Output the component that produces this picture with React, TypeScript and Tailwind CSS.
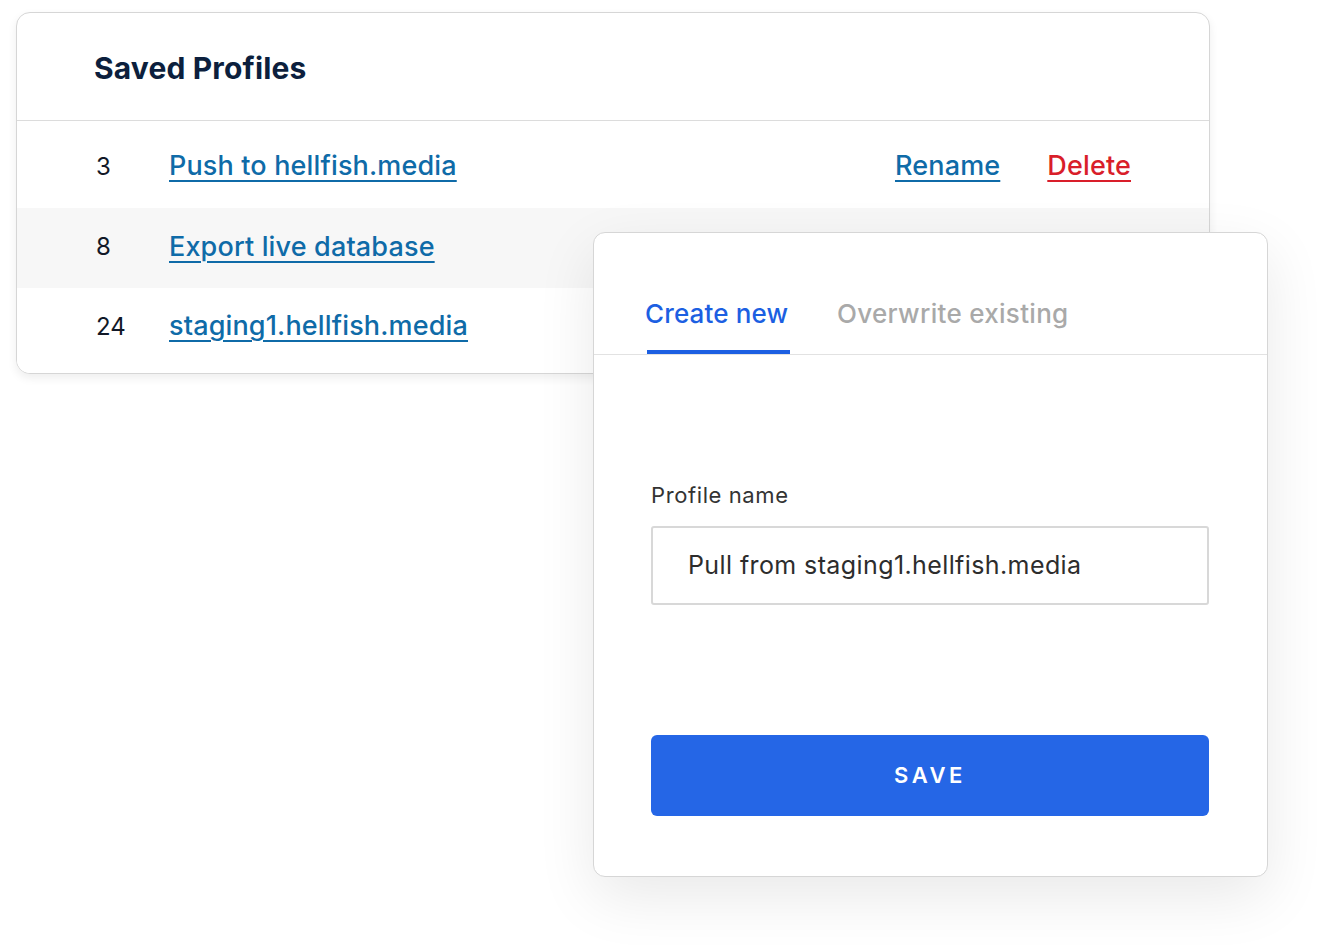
import React from "react";

export default function App() {
  const rows = [
    { n: "3", name: "Push to hellfish.media", bg: "bg-white", cls: "h-[87px] pt-[4px]" },
    { n: "8", name: "Export live database", bg: "bg-[#f7f7f7]", cls: "h-[80px] pb-[2px]" },
    { n: "24", name: "staging1.hellfish.media", bg: "bg-white", cls: "h-[85px] pb-[8px]" },
  ];
  const link = "text-[27px] font-medium tracking-[0.15px] underline underline-offset-[5px] decoration-[2px]";
  return (
    <div
      className="relative w-[1332px] h-[945px] bg-white overflow-hidden"
      style={{ fontFamily: "Inter, 'Noto Sans', sans-serif" }}
    >
      <div className="pt-[12px] pl-[16px]">
        <div className="w-[1194px] rounded-[14px] border border-[#d6d6d6] bg-white overflow-hidden shadow-[0_4px_10px_rgba(0,0,0,0.07)]">
          <div className="h-[108px] flex items-center pl-[77px] border-b border-[#dcdcdc]">
            <h1 className="text-[30px] font-bold text-[#0c1f3d] tracking-[0.15px] pt-[4px]">Saved Profiles</h1>
          </div>
          {rows.map((r, i) => (
            <div key={i} className={`${r.bg} ${r.cls} flex items-center pl-[79px] pr-[78px]`}>
              <span className="w-[73px] text-[24px] text-[#111827]">{r.n}</span>
              <a href="#" className={`${link} text-[#0f6ba8]`}>
                {r.name}
              </a>
              {i === 0 && (
                <div className="ml-auto flex items-center gap-[47px]">
                  <a href="#" className={`${link} text-[#0f6ba8]`}>Rename</a>
                  <a href="#" className={`${link} text-[#d91e2a]`}>Delete</a>
                </div>
              )}
            </div>
          ))}
        </div>
      </div>

      <div className="absolute left-[593px] top-[232px] w-[675px] h-[645px] rounded-[12px] border border-[#d6d6d6] bg-white shadow-[0_20px_60px_rgba(0,0,0,0.09)] flex flex-col">
        <div className="h-[122px] border-b border-[#e2e2e2] flex items-end pl-[51px]">
          <div className="flex gap-[47px]">
            <div className="flex flex-col items-start">
              <span className="text-[26px] font-medium text-[#1c5fe2] tracking-[0.15px]">Create new</span>
              <div className="mt-[17px] h-[4px] w-[143px] bg-[#1c5fe2] ml-[2px]" />
            </div>
            <div className="flex flex-col">
              <span className="text-[26px] font-medium text-[#a9a9a9] tracking-[0.3px]">Overwrite existing</span>
              <div className="mt-[17px] h-[4px]" />
            </div>
          </div>
        </div>
        <div className="pl-[57px] pr-[58px] pt-[124px]">
          <label className="block text-[22px] text-[#333] tracking-[0.6px]">Profile name</label>
          <div className="mt-[14px] h-[79px] rounded-[3px] border-2 border-[#d8d8d8] flex items-center pl-[35px]">
            <span className="text-[25px] text-[#2d2d2d] tracking-[0.4px]">Pull from staging1.hellfish.media</span>
          </div>
          <button className="mt-[130px] w-full h-[81px] rounded-[6px] bg-[#2566e6] text-white text-[22px] font-semibold tracking-[3.5px]">
            SAVE
          </button>
        </div>
      </div>
    </div>
  );
}
